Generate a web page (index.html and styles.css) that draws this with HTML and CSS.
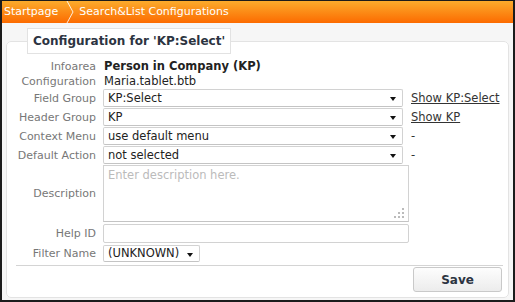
FILE: index.html
```html
<!DOCTYPE html>
<html lang="en">
<head>
    <meta charset="UTF-8">
    <title>Search&amp;List Configurations</title>
    <link rel="stylesheet" href="styles.css">
</head>
<body>
    <div class="frame">
        <div class="topbar">
            <span class="crumb">Startpage</span>
            <svg class="crumb-sep" width="10" height="22" viewBox="0 0 10 22">
                <polyline points="2,0 8,11 2,22" fill="none" stroke="#fff" stroke-width="1" stroke-opacity="0.85"/>
            </svg>
            <span class="crumb">Search&amp;List Configurations</span>
        </div>

        <div class="content">
            <fieldset class="panel">
                <legend>Configuration for 'KP:Select'</legend>

                <div class="rows">
                    <div class="row text-row">
                        <span class="label">Infoarea</span>
                        <span class="value strong">Person in Company (KP)</span>
                    </div>
                    <div class="row text-row">
                        <span class="label">Configuration</span>
                        <span class="value">Maria.tablet.btb</span>
                    </div>
                    <div class="row">
                        <span class="label">Field Group</span>
                        <div class="select">KP:Select<span class="arrow"></span></div>
                        <a class="extra" href="#">Show KP:Select</a>
                    </div>
                    <div class="row">
                        <span class="label">Header Group</span>
                        <div class="select">KP<span class="arrow"></span></div>
                        <a class="extra" href="#">Show KP</a>
                    </div>
                    <div class="row">
                        <span class="label">Context Menu</span>
                        <div class="select">use default menu<span class="arrow"></span></div>
                        <span class="extra">-</span>
                    </div>
                    <div class="row">
                        <span class="label">Default Action</span>
                        <div class="select">not selected<span class="arrow"></span></div>
                        <span class="extra">-</span>
                    </div>
                    <div class="row">
                        <span class="label">Description</span>
                        <div class="textarea">
                            <span class="placeholder">Enter description here.</span>
                            <svg class="grip" width="11" height="11" viewBox="0 0 11 11">
                                <rect x="8" y="0" width="2" height="2" fill="#bbb"/>
                                <rect x="4" y="4" width="2" height="2" fill="#bbb"/>
                                <rect x="8" y="4" width="2" height="2" fill="#bbb"/>
                                <rect x="0" y="8" width="2" height="2" fill="#bbb"/>
                                <rect x="4" y="8" width="2" height="2" fill="#bbb"/>
                                <rect x="8" y="8" width="2" height="2" fill="#bbb"/>
                            </svg>
                        </div>
                    </div>
                    <div class="row help-row">
                        <span class="label">Help ID</span>
                        <div class="input"></div>
                    </div>
                    <div class="row filter-row">
                        <span class="label">Filter Name</span>
                        <div class="select small">(UNKNOWN)<span class="arrow"></span></div>
                    </div>
                </div>

                <div class="divider"></div>
                <div class="footer">
                    <button class="save">Save</button>
                </div>
            </fieldset>
        </div>
    </div>
</body>
</html>
```

FILE: styles.css
```css
body {
    margin: 0;
    font-family: "DejaVu Sans", Verdana, sans-serif;
    font-size: 11.5px;
    color: #222;
}
.frame {
    width: 515px;
    height: 302px;
    box-sizing: border-box;
    border: 2px solid #1b1b1b;
    border-top-width: 1px;
    background: #f6f6f6;
    overflow: hidden;
}
.topbar {
    height: 22px;
    display: flex;
    align-items: center;
    padding-left: 2px;
    background: linear-gradient(#fbab2c, #fc6b00);
    color: #fff;
}
.crumb {
    font-size: 11px;
    line-height: 22px;
}
.crumb-sep {
    margin: 0 4px 0 7px;
    flex-shrink: 0;
}
.content {
    padding: 5px 4px 0 4px;
}
.panel {
    margin: 0;
    padding: 5px 0 5px 0;
    border: 1px solid #e3e3e3;
    border-radius: 5px;
    background: #fff;
    min-width: 0;
}
.panel legend {
    margin-left: 20px;
    padding: 0 5px;
    border: 1px solid #e2e2e2;
    background: #fff;
    font-weight: bold;
    font-size: 12px;
    line-height: 24px;
    color: #2c3441;
}
.rows {
    display: flex;
    flex-direction: column;
    gap: 1px;
}
.row {
    display: flex;
    align-items: center;
    gap: 6px;
}
.text-row {
    height: 14px;
}
.label {
    width: 89px;
    padding-right: 1px;
    flex-shrink: 0;
    text-align: right;
    font-size: 11px;
    color: #777;
    white-space: nowrap;
}
.value {
    padding-left: 1px;
    color: #222;
}
.strong {
    font-weight: bold;
}
.select {
    position: relative;
    width: 300px;
    height: 18px;
    box-sizing: border-box;
    border: 1px solid #d2d2d2;
    border-bottom-color: #c4c4c4;
    border-radius: 2px;
    padding-left: 4px;
    line-height: 16px;
    color: #222;
    background: #fff;
}
.select.small {
    width: 97px;
    height: 17px;
    line-height: 15px;
}
.arrow {
    position: absolute;
    right: 6px;
    top: 7px;
    width: 0;
    height: 0;
    border-left: 3px solid transparent;
    border-right: 3px solid transparent;
    border-top: 4px solid #111;
}
.extra {
    margin-left: 2px;
    color: #333;
    white-space: nowrap;
}
a.extra {
    text-decoration: underline;
}
.textarea {
    position: relative;
    width: 306px;
    height: 57px;
    box-sizing: border-box;
    border: 1px solid #d2d2d2;
    border-bottom-color: #c4c4c4;
    padding: 2px 4px;
}
.placeholder {
    color: #bbb;
}
.grip {
    position: absolute;
    right: 3px;
    bottom: 2px;
}
.help-row {
    margin-top: 1px;
}
.input {
    width: 306px;
    height: 19px;
    box-sizing: border-box;
    border: 1px solid #d2d2d2;
    border-radius: 2px;
}
.filter-row {
    margin-top: 1px;
}
.divider {
    height: 1px;
    margin: 3px 5px 0 9px;
    background: #d4d4d4;
}
.footer {
    display: flex;
    justify-content: flex-end;
    padding: 1px 6px 0 0;
}
.save {
    width: 89px;
    height: 25px;
    border: 1px solid #c9c9c9;
    border-radius: 3px;
    background: linear-gradient(#fdfdfd, #ececec);
    font-family: "DejaVu Sans", Verdana, sans-serif;
    font-size: 12px;
    font-weight: bold;
    color: #2c3441;
}
```
